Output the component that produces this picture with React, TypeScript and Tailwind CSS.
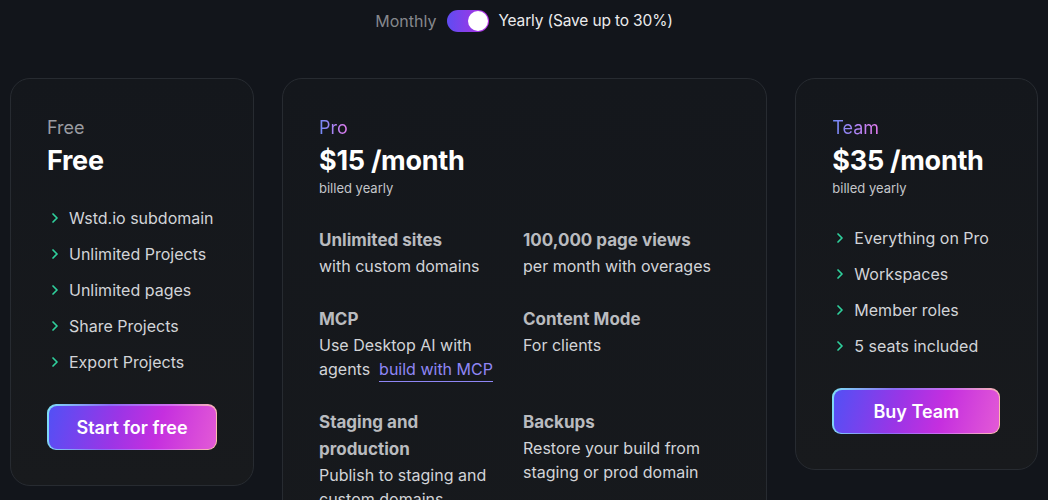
import { ChevronRight } from "lucide-react";

type Feature = { title: string; desc: React.ReactNode };

const FREE_ITEMS = [
  "Wstd.io subdomain",
  "Unlimited Projects",
  "Unlimited pages",
  "Share Projects",
  "Export Projects",
];

const TEAM_ITEMS = [
  "Everything on Pro",
  "Workspaces",
  "Member roles",
  "5 seats included",
];

const PRO_FEATURES: Feature[] = [
  { title: "Unlimited sites", desc: "with custom domains" },
  { title: "100,000 page views", desc: "per month with overages" },
  {
    title: "MCP",
    desc: (
      <>
        Use Desktop AI with agents{"\u00a0 "}
        <a className="border-b border-[#8f86f5] pb-[2px] text-[#8f86f5]">build with MCP</a>
      </>
    ),
  },
  { title: "Content Mode", desc: "For clients" },
  { title: "Staging and production", desc: "Publish to staging and custom domains" },
  { title: "Backups", desc: "Restore your build from staging or prod domain" },
  { title: "Custom code", desc: "Add scripts and styles to any page" },
  { title: "Priority support", desc: "Get help from the team" },
];

function CheckList({ items }: { items: string[] }) {
  return (
    <ul className="flex flex-col">
      {items.map((item) => (
        <li key={item} className="flex h-9 items-center gap-1.5 text-[16px] text-[#d2d4d8]">
          <ChevronRight size={16} strokeWidth={2.6} className="shrink-0 text-[#2fd09c]" />
          <span>{item}</span>
        </li>
      ))}
    </ul>
  );
}

function GradientButton({ label, width }: { label: string; width: string }) {
  return (
    <div
      className={`${width} rounded-[9px] bg-[linear-gradient(100deg,#7ee0f5_0%,#8b6cf5_35%,#d36ef0_70%,#ffc3a8_100%)] p-[1.5px]`}
    >
      <button className="flex h-[43px] w-full items-center justify-center rounded-[8px] bg-[linear-gradient(105deg,#5250f5_0%,#9b35e6_40%,#c52fdf_65%,#e35ad6_100%)] text-[18px] font-semibold text-white">
        {label}
      </button>
    </div>
  );
}

function PlanHeader({ label, price, billed, gradient }: { label: string; price: string; billed?: string; gradient?: boolean }) {
  return (
    <div className="flex flex-col">
      <span
        className={
          gradient
            ? "w-fit bg-[linear-gradient(90deg,#6f8af7,#e67cf0)] bg-clip-text text-[18px] leading-7 text-transparent"
            : "text-[18px] leading-7 text-[#9a9ca1]"
        }
      >
        {label}
      </span>
      <span className="mt-px text-[27px] font-bold leading-9 tracking-[-0.01em] text-white">{price}</span>
      {billed && <span className="text-[13px] leading-[18px] text-[#c4c6ca]">{billed}</span>}
    </div>
  );
}

const cardClass =
  "rounded-[20px] border border-[#272b31] bg-[linear-gradient(180deg,#14171c_0%,#181a1d_100%)] px-[36px] pt-[35px] pb-[35px]";

export default function App() {
  return (
    <div
      className="min-h-screen bg-[#12151b] text-white"
      style={{ fontFamily: "Inter, 'Noto Sans', sans-serif" }}
    >
      <div className="flex h-[42px] items-center justify-center text-[16px]">
        <span className="text-[#86888d]">Monthly</span>
        <div className="ml-[11px] mr-[9px] flex h-[22px] w-[42px] items-center justify-end rounded-full bg-[linear-gradient(90deg,#5f4cf2,#b52fe0)] px-px">
          <div className="h-5 w-5 rounded-full bg-white" />
        </div>
        <span className="text-[15.5px] tracking-[-0.01em] text-[#ebebed]">Yearly (Save up to 30%)</span>
      </div>

      <div className="mt-9 grid grid-cols-[1fr_2fr_1fr] items-start gap-7 px-[10px]">
        <div className={cardClass}>
          <PlanHeader label="Free" price="Free" />
          <div className="mt-[21px]">
            <CheckList items={FREE_ITEMS} />
          </div>
          <div className="mt-6">
            <GradientButton label="Start for free" width="w-[170px]" />
          </div>
        </div>

        <div className={cardClass}>
          <PlanHeader label="Pro" price="$15 /month" billed="billed yearly" gradient />
          <div className="mt-[30px] grid grid-cols-[204px_1fr] gap-y-7">
            {PRO_FEATURES.map((f) => (
              <div key={f.title} className="flex flex-col pr-4">
                <span className="text-[17px] font-bold leading-[27px] text-[#b9bbbf]">{f.title}</span>
                <span className="text-[16px] leading-6 text-[#d2d4d8]">{f.desc}</span>
              </div>
            ))}
          </div>
          <div className="mt-8">
            <GradientButton label="Buy Pro" width="w-[170px]" />
          </div>
        </div>

        <div className={cardClass}>
          <PlanHeader label="Team" price="$35 /month" billed="billed yearly" gradient />
          <div className="mt-[23px]">
            <CheckList items={TEAM_ITEMS} />
          </div>
          <div className="mt-6">
            <GradientButton label="Buy Team" width="w-[168px]" />
          </div>
        </div>
      </div>
    </div>
  );
}
